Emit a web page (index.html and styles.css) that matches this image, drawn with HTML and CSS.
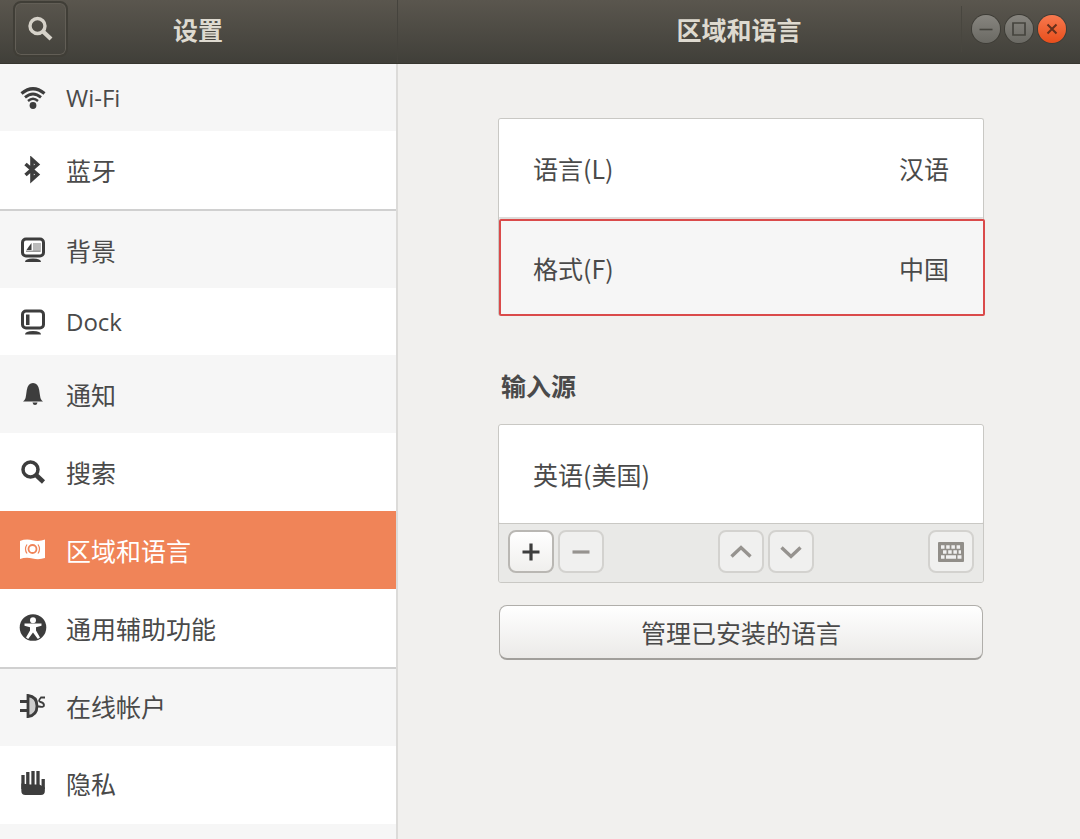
FILE: index.html
```html
<!DOCTYPE html>
<html lang="zh-CN">
<head>
<meta charset="utf-8">
<title>设置</title>
<link rel="stylesheet" href="styles.css">
</head>
<body>
<header class="titlebar">
  <div class="titlebar-side">
    <button class="search-button" aria-label="搜索设置">
      <svg width="28" height="28" viewBox="0 0 28 28" fill="none" stroke="#d6d2c9"><circle cx="10.500" cy="11" r="7.500" stroke-width="3.400"/><path d="M15.500 16l8.500 8" stroke-width="4.200"/></svg>
    </button>
    <h1 class="title">设置</h1>
  </div>
  <div class="titlebar-main">
    <h2 class="title">区域和语言</h2>
    <div class="controls">
      <button class="control" aria-label="最小化"><svg width="28" height="28" viewBox="0 0 28 28" fill="none" stroke="#45443e" stroke-width="1.600"><path d="M7.500 14.500h13"/></svg></button>
      <button class="control" aria-label="最大化"><svg width="28" height="28" viewBox="0 0 28 28" fill="none" stroke="#45443e" stroke-width="1.700"><path d="M8 8h12v12H8z"/></svg></button>
      <button class="control control-close" aria-label="关闭"><svg width="28" height="28" viewBox="0 0 28 28" fill="none" stroke="#66301c" stroke-width="2"><path d="M9.500 9.500l9 9m0-9l-9 9"/></svg></button>
    </div>
  </div>
</header>
<div class="body">
  <nav class="sidebar">
    <a class="item item-latin" href="#wifi">
      <svg class="icon" viewBox="0 0 28 28" fill="none" stroke="#3d3d3d"><path d="M2.500 9.500Q14 0 25.500 9.500" stroke-width="3.200"/><path d="M6 13.400Q14 6.600 22 13.400" stroke-width="2.800"/><path d="M9 17Q14 12.600 19 17" stroke-width="2.400"/><circle cx="14" cy="21.500" r="3.400" fill="#3d3d3d" stroke="none"/></svg>
      <span class="label">Wi-Fi</span></a>
    <a class="item" href="#bluetooth">
      <svg class="icon" viewBox="0 0 28 28" fill="none" stroke="#3d3d3d" stroke-width="3.600"><path d="M6.500 8L18.500 18.500 13 23.500V3.500l5.500 5L6.500 19"/></svg>
      <span class="label">蓝牙</span></a>
    <a class="item item-group" href="#background">
      <svg class="icon" viewBox="0 0 28 28"><rect x="3.500" y="3" width="21" height="17" rx="3.500" fill="#fff" stroke="#3d3d3d" stroke-width="3"/><path d="M14 7h8v9h-8z" fill="#bbb"/><path d="M12.500 7v7H7.500l2-3z" fill="#3d3d3d"/><path d="M7 14.500h14V16H7z" fill="#999"/><path d="M6 26q0-3.500 8-3.500t8 3.500z" fill="#3d3d3d"/></svg>
      <span class="label">背景</span></a>
    <a class="item item-latin" href="#dock">
      <svg class="icon" viewBox="0 0 28 28"><rect x="3.500" y="3" width="21" height="17" rx="3.500" fill="#fff" stroke="#3d3d3d" stroke-width="3"/><path d="M7 6.500h3.500V17H7z" fill="#3d3d3d"/><path d="M6 26.500q0-3.500 8-3.500t8 3.500z" fill="#3d3d3d"/></svg>
      <span class="label">Dock</span></a>
    <a class="item" href="#notifications">
      <svg class="icon" viewBox="0 0 28 28" fill="#3d3d3d"><path d="M4 21.500q2.500-1.500 3-6l.8-5.500Q9 3 14 3t6.200 7l.8 5.500q.5 4.500 3 6z"/><path d="M13.500 22.500h5q-.5 2.500-2.500 2.500t-2.500-2.500z"/></svg>
      <span class="label">通知</span></a>
    <a class="item" href="#search">
      <svg class="icon" viewBox="0 0 28 28" fill="none" stroke="#3d3d3d"><circle cx="11.500" cy="11.500" r="7.500" stroke-width="3.500"/><path d="M16.500 16.500l8 7.500" stroke-width="4.500"/></svg>
      <span class="label">搜索</span></a>
    <a class="item item-active" href="#region" aria-current="page">
      <svg class="icon" viewBox="0 0 28 28"><path d="M1 5q6-2.500 12.500-.8t12.500-.7V22q-6 2-12.500.500T1 23z" fill="#fff"/><circle cx="13.500" cy="13" r="4" fill="none" stroke="#f08458" stroke-width="1.800"/><path d="M8 8.500q-3 4.500 0 9M19 8.500q3 4.500 0 9" fill="none" stroke="#f08458" stroke-width="1.200"/></svg>
      <span class="label">区域和语言</span></a>
    <a class="item" href="#access">
      <svg class="icon" viewBox="0 0 28 28"><circle cx="14" cy="13.500" r="13.300" fill="#3d3d3d"/><circle cx="14" cy="6.300" r="3" fill="#fff"/><path d="M5.500 9.500h17v2.200l-5.500 1.600v3.200l4 7-2.200 1.500-4.800-6.500-4.800 6.500L7 23.500l4-7v-3.200L5.500 11.700z" fill="#fff"/></svg>
      <span class="label">通用辅助功能</span></a>
    <a class="item item-group item-raised" href="#accounts">
      <svg class="icon" viewBox="0 0 28 28" fill="none" stroke="#3d3d3d"><path d="M1 9.500h7M1 18.500h7" stroke-width="3"/><path d="M9 3.500q9 1 9 10.500t-9 10.500z" fill="#ccc" stroke-width="2.800"/><path d="M18 14.500h2q5.500 1 5-1.500t-3.500-3 .5-4.500h4" stroke-width="1.800"/></svg>
      <span class="label">在线帐户</span></a>
    <a class="item item-raised" href="#privacy">
      <svg class="icon" viewBox="0 0 28 28"><path d="M4 6v14M8.800 3v15M14 2v15M19 2v16M24.200 10v10" fill="none" stroke="#3d3d3d" stroke-width="3.300"/><path d="M2.350 14.500l9 1 9 0 5.500 3V22q0 4-4 4H6.350q-4 0-4-4z" fill="#3d3d3d"/></svg>
      <span class="label">隐私</span></a>
  </nav>
  <main class="content">
    <section class="card card-open">
      <button class="row row-divided"><span>语言(L)</span><span>汉语</span></button>
      <button class="row row-marked"><span>格式(F)</span><span>中国</span></button>
    </section>
    <h3 class="heading">输入源</h3>
    <section class="card">
      <button class="row"><span>英语(美国)</span></button>
      <div class="toolbar">
        <div class="tools">
          <button class="tool" aria-label="添加"><svg width="28" height="28" viewBox="0 0 28 28" fill="none" stroke="#3d3d3d" stroke-width="3.200"><path d="M5.500 14h17M14 5.500v17"/></svg></button>
          <button class="tool" disabled aria-label="移除"><svg width="28" height="28" viewBox="0 0 28 28" fill="none" stroke="#96938f" stroke-width="3.200"><path d="M5.500 14h17"/></svg></button>
        </div>
        <div class="tools">
          <button class="tool" disabled aria-label="上移"><svg width="28" height="28" viewBox="0 0 28 28" fill="none" stroke="#96938f" stroke-width="3.400"><path d="M4.500 18.500L14 9.500l9.500 9"/></svg></button>
          <button class="tool" disabled aria-label="下移"><svg width="28" height="28" viewBox="0 0 28 28" fill="none" stroke="#96938f" stroke-width="3.400"><path d="M4.500 9.500L14 18.500l9.500-9"/></svg></button>
        </div>
        <button class="tool" disabled aria-label="键盘布局"><svg width="28" height="28" viewBox="0 0 28 28"><rect x="1" y="4" width="26" height="20" rx="1" fill="#918e89"/><path d="M4 9h20" stroke="#f0f0f0" stroke-width="3.500" stroke-dasharray="3.500 1.700"/><path d="M6 14h18" stroke="#f0f0f0" stroke-width="3.500" stroke-dasharray="3.500 1.700"/><path d="M4 19h3.500m1.500 0h10m1.500 0h4" stroke="#f0f0f0" stroke-width="3.500"/></svg></button>
      </div>
    </section>
    <button class="manage">管理已安装的语言</button>
  </main>
</div>
</body>
</html>
```
FILE: styles.css
```css
* { box-sizing: border-box; }
body {
  margin: 0;
  height: 100vh;
  display: flex;
  flex-direction: column;
  overflow: hidden;
  background: #f1f0ee;
  color: #4a4a4a;
  font: 25px/36px "Noto Sans CJK SC", sans-serif;
}
button { font: inherit; color: inherit; margin: 0; padding: 0; }
svg { display: block; flex: none; }

.titlebar {
  display: flex;
  height: 64px;
  flex: none;
  background: linear-gradient(#5a564e, #403f39);
  border-bottom: 1px solid #37362f;
  color: #dedad0;
}
.titlebar-side, .titlebar-main {
  display: grid;
  grid-template-columns: 1fr auto 1fr;
  align-items: center;
}
.titlebar-side { width: 398px; border-right: 1px solid #45433d; padding: 0 14px 5px 13px; }
.titlebar-main { flex: 1; padding: 0 14px 5px; }
.titlebar-main .title { grid-column: 2; }
.title { margin: 0; font-size: 25px; font-weight: 700; }
.search-button {
  width: 55px;
  height: 56px;
  display: grid;
  place-items: center;
  background: transparent;
  border: 2px solid #403e37;
  border-radius: 8px;
  box-shadow: inset 0 0 0 1px #625e56;
}
.controls {
  justify-self: end;
  display: flex;
  align-items: center;
  gap: 5px;
  height: 46px;
  padding-left: 10px;
  border-left: 1px solid #48463f;
}
.control {
  width: 28px;
  height: 28px;
  border: 0;
  border-radius: 50%;
  background: linear-gradient(#87857f, #6a6963);
  box-shadow: 0 0 0 1px #3d3c36;
}
.control-close { background: linear-gradient(#f7794f, #e84e1b); }

.body { flex: 1; min-height: 0; display: flex; }
.sidebar {
  width: 398px;
  flex: none;
  overflow: hidden;
  background: #f6f6f6;
  border-right: 2px solid #dcdbd9;
}
.item {
  display: flex;
  align-items: center;
  gap: 19px;
  height: 78px;
  padding: 0 19px;
  color: inherit;
  text-decoration: none;
}
.item:nth-child(even) { background: #fff; }
.item-latin { height: 67px; }
.item-group { height: 79px; border-top: 2px solid #d0d0d0; }
.item-raised { padding-bottom: 4px; }
.item-active { background: #f08458; color: #fff; }
.icon { width: 28px; height: 28px; }
.item-latin .label { font-family: "Open Sans", sans-serif; font-size: 24px; }

.content { flex: 1; padding: 54px 96px 0 100px; }
.card { border: 1px solid #c9c8c4; border-radius: 3px; overflow: hidden; }
.card-open { border-bottom: 0; overflow: visible; }
.row {
  display: flex;
  align-items: center;
  justify-content: space-between;
  width: 100%;
  height: 98px;
  padding: 0 34px;
  border: 0;
  border-radius: 2px;
  background: #fff;
}
.row-divided { height: 100px; border-bottom: 2px solid #dddcda; }
.row-marked {
  width: calc(100% + 2px);
  height: 97px;
  padding: 0 34px 0 32px;
  background: #f6f6f6;
  border: 2px solid #da4a4a;
}
.heading { margin: 51px 3px 21px; font-size: 25px; line-height: 36px; font-weight: 700; }
.toolbar {
  display: flex;
  justify-content: space-between;
  align-items: center;
  height: 59px;
  padding: 0 9px 3px;
  border-top: 1px solid #c9c8c4;
  background: #e9e9e7;
}
.tools { display: flex; gap: 4px; }
.tool {
  width: 46px;
  height: 43px;
  display: grid;
  place-items: center;
  border: 2px solid #b9b7b3;
  border-radius: 8px;
  background: linear-gradient(#fff, #f0efed);
}
.tool:disabled { border-color: #d3d2cf; background: #f0f0ef; }
.manage {
  display: block;
  width: calc(100% - 2px);
  height: 55px;
  margin: 22px 1px 0;
  border: 1px solid #b0aeaa;
  border-bottom: 2px solid #a19f9b;
  border-radius: 8px;
  background: linear-gradient(#fff, #ebeae8);
}
```
